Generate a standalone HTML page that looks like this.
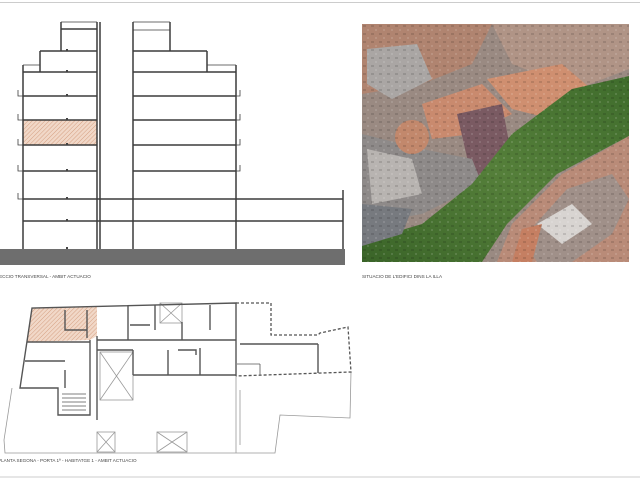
<!DOCTYPE html>
<html><head><meta charset="utf-8"><style>
html,body{margin:0;padding:0;background:#fff;width:640px;height:480px;overflow:hidden}
svg{display:block}
text{font-family:"Liberation Sans",sans-serif;font-size:4.6px;fill:#444}
</style></head><body>
<svg width="640" height="480" viewBox="0 0 640 480" xmlns="http://www.w3.org/2000/svg">
<defs>
<pattern id="h" width="3" height="3" patternUnits="userSpaceOnUse" patternTransform="rotate(45)">
<rect width="3" height="3" fill="#f1d8c8"/><line x1="0" y1="0" x2="0" y2="3" stroke="#d29a7a" stroke-width="0.9"/></pattern>
<linearGradient id="tree" x1="0" y1="1" x2="1" y2="0">
<stop offset="0" stop-color="#3a6428"/><stop offset="0.5" stop-color="#557f3a"/><stop offset="1" stop-color="#3f6c2c"/></linearGradient>
<pattern id="tx" width="8" height="8" patternUnits="userSpaceOnUse">
<rect width="8" height="8" fill="none"/><rect x="1" y="1" width="3" height="2" fill="#000" opacity="0.12"/><rect x="5" y="5" width="2" height="2" fill="#fff" opacity="0.12"/></pattern>
</defs>
<line x1="0" y1="2.5" x2="640" y2="2.5" stroke="#ccc" stroke-width="1"/>
<line x1="0" y1="477" x2="640" y2="477" stroke="#ccc" stroke-width="1"/>

<!-- SECTION -->
<rect x="0" y="249" width="345" height="16" fill="#6e6e6e"/>
<rect x="23" y="120" width="74" height="25" fill="url(#h)"/>
<g stroke="#3c3c3c" stroke-width="1.5" fill="none">
<line x1="23" y1="65" x2="23" y2="249"/>
<line x1="97" y1="22" x2="97" y2="249"/>
<line x1="100" y1="22" x2="100" y2="249"/>
<line x1="133" y1="22" x2="133" y2="249"/>
<line x1="236" y1="65" x2="236" y2="249"/>
<line x1="343" y1="190" x2="343" y2="249"/>
<line x1="40" y1="51" x2="40" y2="72"/>
<line x1="61" y1="22" x2="61" y2="51"/>
<line x1="207" y1="51" x2="207" y2="72"/>
<line x1="170" y1="22" x2="170" y2="51"/>
<line x1="61" y1="22" x2="97" y2="22" stroke-width="0.8"/>
<line x1="133" y1="22" x2="170" y2="22" stroke-width="0.8"/>
<line x1="61" y1="29" x2="97" y2="29"/>
<line x1="133" y1="30" x2="170" y2="30" stroke-width="0.7"/>
<line x1="40" y1="51" x2="97" y2="51"/><line x1="133" y1="51" x2="207" y2="51"/>
<line x1="23" y1="72" x2="97" y2="72"/><line x1="133" y1="72" x2="236" y2="72"/>
<line x1="23" y1="65" x2="40" y2="65" stroke-width="0.7"/><line x1="207" y1="65" x2="236" y2="65" stroke-width="0.7"/>
<line x1="23" y1="96" x2="97" y2="96"/><line x1="133" y1="96" x2="236" y2="96"/>
<line x1="23" y1="120" x2="97" y2="120"/><line x1="133" y1="120" x2="236" y2="120"/>
<line x1="23" y1="145" x2="97" y2="145"/><line x1="133" y1="145" x2="236" y2="145"/>
<line x1="23" y1="171" x2="97" y2="171"/><line x1="133" y1="171" x2="236" y2="171"/>
<line x1="23" y1="199" x2="343" y2="199"/>
<line x1="23" y1="221" x2="343" y2="221"/>
<g stroke-width="0.8">
<path d="M18 90v6h5M18 114v6h5M18 139v6h5M18 165v6h5M18 193v6h5M240 90v6h-4M240 114v6h-4M240 139v6h-4M240 165v6h-4"/>
</g>
</g>
<g fill="#444"><rect x="66" y="70" width="2" height="2"/><rect x="66" y="94" width="2" height="2"/><rect x="66" y="118" width="2" height="2"/><rect x="66" y="143" width="2" height="2"/><rect x="66" y="169" width="2" height="2"/><rect x="66" y="197" width="2" height="2"/><rect x="66" y="219" width="2" height="2"/><rect x="66" y="247" width="2" height="2"/><rect x="66" y="49" width="2" height="2"/></g>
<text x="-4" y="278">SECCIO TRANSVERSAL - AMBIT ACTUACIO</text>

<!-- AERIAL PHOTO -->
<svg x="362" y="24" width="267" height="238" viewBox="0 0 267 238">
<rect width="267" height="238" fill="#9a8a82"/>
<polygon points="0,0 130,0 110,40 60,60 0,70" fill="#b08470"/>
<polygon points="5,25 55,20 70,55 30,75 5,60" fill="#aaa6a4"/>
<polygon points="130,0 267,0 267,45 215,65 150,40" fill="#b09486"/>
<polygon points="60,80 120,60 150,90 110,110 70,115" fill="#c98a6e"/>
<polygon points="125,55 200,40 235,70 190,95 150,85" fill="#cf8f70"/>
<polygon points="95,90 140,80 150,135 110,155" fill="#7a5a62"/>
<polygon points="0,110 60,125 110,135 120,160 60,190 0,200" fill="#8e8a89"/>
<polygon points="5,125 50,135 60,170 10,180" fill="#b8b4b1"/>
<circle cx="50" cy="113" r="17" fill="#c2886c"/>
<polygon points="0,238 0,218 60,200 110,160 150,110 210,65 267,52 267,112 195,150 145,200 120,238" fill="url(#tree)"/>
<polygon points="135,238 150,200 200,150 267,112 267,238" fill="#b98b78"/>
<polygon points="160,215 205,165 250,150 267,175 250,210 210,238 175,238" fill="#a09089"/>
<polygon points="175,200 210,180 230,200 200,220" fill="#d8d4d1"/>
<polygon points="150,238 160,205 180,200 170,238" fill="#c57f62"/>
<polygon points="0,180 50,185 40,210 0,222" fill="#777a7f"/>
<rect width="267" height="238" fill="url(#tx)"/>
</svg>
<text x="362" y="278">SITUACIO DE L'EDIFICI DINS LA ILLA</text>

<!-- PLAN -->
<polygon points="32,308 97,307 97,336 90,340 27,342" fill="url(#h)"/>
<g fill="none" stroke="#999" stroke-width="0.8">
<polyline points="12,388 4,440 5,453 275,453 280,415 350,418 351,372"/>
<line x1="236" y1="376" x2="236" y2="453"/>
<line x1="240" y1="390" x2="240" y2="445"/>
<rect x="97" y="432" width="18" height="20"/><path d="M97 432l18 20M115 432l-18 20"/>
<rect x="157" y="432" width="30" height="20"/><path d="M157 432l30 20M187 432l-30 20"/>
<rect x="100" y="352" width="33" height="48"/><path d="M100 352l33 48M133 352l-33 48"/>
<rect x="160" y="303" width="22" height="20"/><path d="M160 303l22 20M182 303l-22 20"/>
</g>
<g fill="none" stroke="#555" stroke-width="1.4">
<polyline points="236,376 236,303 32,308 20,388 58,388 58,415 90,415 90,340"/>
<line x1="27" y1="342" x2="90" y2="342"/>
<line x1="25" y1="361" x2="65" y2="361"/>
<line x1="65" y1="370" x2="65" y2="388"/>
<line x1="97" y1="336" x2="97" y2="420"/>
<line x1="97" y1="340" x2="236" y2="340"/>
<line x1="97" y1="350" x2="133" y2="350"/>
<line x1="133" y1="350" x2="133" y2="375"/>
<line x1="133" y1="375" x2="236" y2="375"/>
<line x1="168" y1="350" x2="168" y2="375"/>
<line x1="200" y1="348" x2="200" y2="375"/>
<line x1="128" y1="305" x2="128" y2="340"/>
<line x1="155" y1="305" x2="155" y2="330"/>
<line x1="182" y1="322" x2="182" y2="340"/>
<line x1="210" y1="305" x2="210" y2="330"/>
<path d="M65 310v20h22M87 310v28M130 325h20M178 350h18v5"/>
<line x1="240" y1="344" x2="318" y2="344"/><line x1="318" y1="344" x2="318" y2="373"/>
<line x1="237" y1="364" x2="260" y2="364" stroke-width="0.8"/><line x1="260" y1="364" x2="260" y2="375" stroke-width="0.8"/>
<path d="M62 394h24M62 398h24M62 402h24M62 406h24M62 410h24" stroke-width="0.7"/>
</g>
<g fill="none" stroke="#555" stroke-width="1.3" stroke-dasharray="3,2">
<polyline points="236,303 271,303 271,335 318,335 320,333 348,327 351,372 236,376"/>
</g>
<text x="-2" y="462">PLANTA SEGONA - PORTA 1ª - HABITATGE 1 - AMBIT ACTUACIO</text>
</svg>
</body></html>
